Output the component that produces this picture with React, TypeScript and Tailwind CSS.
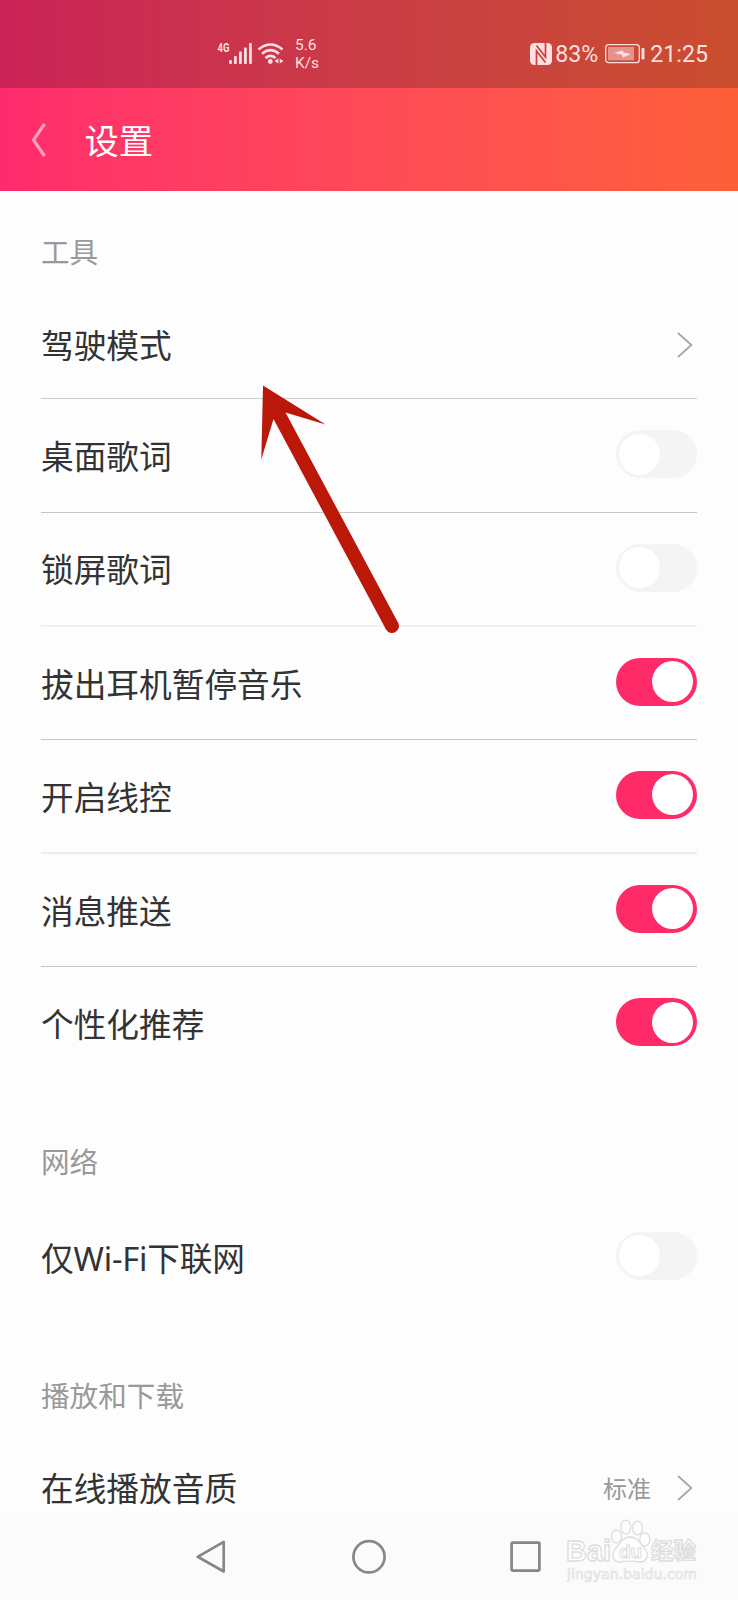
import { ReactNode } from 'react';

interface SettingRowProps {
  label: string;
  children: ReactNode;
  /** Height, divider and spacing classes */
  className?: string;
}

function SettingRow({ label, children, className = '' }: SettingRowProps) {
  return (
    <div className={`flex shrink-0 items-center justify-between ${className}`}>
      <span className="pt-[3.5px] text-[32.7px] leading-[48px] text-[#333333]">{label}</span>
      {children}
    </div>
  );
}

function Switch({ on = false }: { on?: boolean }) {
  return (
    <div
      role="switch"
      aria-checked={on}
      className={`mb-[2px] flex h-12 w-[81px] items-center rounded-full ${
        on ? 'justify-end bg-[#ff2a68] pr-[4px]' : 'justify-start bg-[#f4f4f4] pl-[3px]'
      }`}
    >
      <div className="size-[41px] rounded-full bg-white" />
    </div>
  );
}

function ChevronRight() {
  return (
    <svg width="16" height="26" viewBox="0 0 16 26" fill="none" stroke="#a6a6a6" strokeWidth="1.8">
      <path d="M1 1L14.4 13L1 25" />
    </svg>
  );
}

function SectionTitle({ children, className = '' }: { children: ReactNode; className?: string }) {
  return (
    <h2 className={`shrink-0 text-[28.6px] leading-10 font-normal text-[#999999] ${className}`}>
      {children}
    </h2>
  );
}

function StatusBar() {
  return (
    <div className="flex h-[88px] shrink-0 items-start bg-linear-to-r from-[#cb2257] to-[#c94e2d] pr-[30px] pl-[217px] font-[Roboto,sans-serif] text-[#ffdfdf]">
      {/* Mobile signal and wifi */}
      <svg className="mt-[40px]" width="68" height="26" viewBox="217 40 68 26" fill="currentColor">
        <text x="217.5" y="52.3" fontSize="13" fontWeight="700" textLength="12" lengthAdjust="spacingAndGlyphs">
          4G
        </text>
        <rect x="229" y="60" width="2.8" height="4" rx="0.8" />
        <rect x="234" y="56" width="2.8" height="8" rx="0.8" />
        <rect x="239" y="51.5" width="2.8" height="12.5" rx="0.8" />
        <rect x="244" y="47.5" width="2.8" height="16.5" rx="0.8" />
        <rect x="249" y="43" width="2.8" height="21" rx="0.8" />
        <g fill="none" stroke="currentColor" strokeWidth="2.6">
          <path d="M258.5 49.5Q270.5 39.5 282.5 49.5" />
          <path d="M262 53.8Q270.5 46.6 279 53.8" />
          <path d="M265.5 58Q270.5 53.8 275.5 58" />
        </g>
        <circle cx="270.3" cy="61.5" r="2.4" />
        <path d="M278.3 58.5v5l-3.8-2.5zM279.7 58.5v5l3.8-2.5z" />
      </svg>
      <div className="mt-[36px] ml-[10px] text-[15.5px] leading-[18px]">
        <div>5.6</div>
        <div>K/s</div>
      </div>
      <div className="mt-[40px] ml-auto flex h-7 items-center">
        {/* NFC */}
        <svg className="mr-[3px]" width="22" height="22" viewBox="0 0 22 22">
          <rect width="22" height="22" rx="4.5" fill="currentColor" />
          <g fill="none" stroke="#c8413e" strokeWidth="1.7">
            <path d="M6.5 22V8L15.5 19.5" />
            <path d="M15.5 0V14L6.5 2.5" />
          </g>
        </svg>
        <span className="w-[50px] text-[23.2px] leading-7">83%</span>
        <svg className="mr-[5px]" width="40" height="20" viewBox="0 0 40 20">
          <rect x="0.7" y="0.7" width="33.6" height="18" rx="3" fill="none" stroke="currentColor" strokeWidth="1.3" />
          <rect x="3" y="3" width="26" height="13.4" fill="currentColor" opacity="0.5" />
          <path d="M9 9L17.5 6.2L18.5 8.6L26 10L18 13.4L16.6 10.6Z" fill="currentColor" />
          <rect x="36.5" y="4" width="3" height="11.5" rx="1" fill="currentColor" />
        </svg>
        <span className="text-[23.2px] leading-7">21:25</span>
      </div>
    </div>
  );
}

function NavigationBar() {
  return (
    <div className="flex h-[86px] shrink-0 items-center bg-[#fbfbfb] pl-[196px]">
      <svg width="346" height="36" viewBox="196 1539 346 36" fill="none" stroke="#878787" strokeWidth="2.7" strokeLinejoin="round">
        <path d="M223.7 1541.8V1571.5L197.7 1556.8Z" />
        <circle cx="369" cy="1556.8" r="15.6" />
        <rect x="511.6" y="1542.6" width="27.8" height="28" rx="1" />
      </svg>
    </div>
  );
}

function Watermark() {
  return (
    <svg
      className="absolute top-[1515px] left-[560px]"
      width="145"
      height="70"
      viewBox="560 1515 145 70"
      fill="#fdfdfd"
      stroke="#dedede"
      strokeWidth="1.3"
    >
      <text x="566" y="1560.5" fontFamily="Liberation Sans" fontWeight="700" fontSize="29" textLength="45" lengthAdjust="spacingAndGlyphs">
        Bai
      </text>
      <ellipse cx="616.5" cy="1536.5" rx="5" ry="6.5" />
      <ellipse cx="625.8" cy="1527" rx="5" ry="6.8" />
      <ellipse cx="637.5" cy="1528" rx="5" ry="6.8" />
      <ellipse cx="644.8" cy="1539.5" rx="5" ry="6.5" />
      <path d="M630 1537C638 1537 640 1544 645 1549C650 1556 646 1562 640 1562C634 1561 626 1561 620 1562C613 1562 611 1555 615 1549C620 1544 623 1537 630 1537Z" />
      <text x="619" y="1558" fontFamily="Liberation Sans" fontWeight="700" fontSize="19" strokeWidth="1">
        du
      </text>
      <text x="651" y="1559" fontFamily="Noto Sans CJK SC" fontWeight="700" fontSize="22.5">
        经验
      </text>
      <text x="567" y="1578.5" fontFamily="DejaVu Sans" fontSize="14" strokeWidth="0.7" textLength="130" lengthAdjust="spacingAndGlyphs">
        jingyan.baidu.com
      </text>
    </svg>
  );
}

export default function App() {
  return (
    <div className="relative flex h-[1600px] w-[738px] flex-col overflow-hidden bg-[#fdfdfd] font-['Noto_Sans','Noto_Sans_CJK_SC',sans-serif]">
      <StatusBar />

      <header className="flex h-[102.5px] shrink-0 items-center bg-linear-to-r from-[#ff2a6d] to-[#fd6038] pl-[31px]">
        <svg className="mt-[1px]" width="16" height="34" viewBox="0 0 16 34" fill="none" stroke="#ffa0b8" strokeWidth="3.2">
          <path d="M13.5 1L2.5 17L13.5 33" />
        </svg>
        <h1 className="ml-[37.5px] pt-[4px] text-[34.3px] leading-[48px] font-normal text-white">设置</h1>
      </header>

      <main className="flex flex-col px-[41px]">
        <SectionTitle className="mt-[41px]">工具</SectionTitle>
        <SettingRow label="驾驶模式" className="mt-[19px] h-[108.5px] border-b border-[#cccccc]">
          <div className="pt-[1px] pr-[4px]">
            <ChevronRight />
          </div>
        </SettingRow>
        <SettingRow label="桌面歌词" className="h-[113.6px] border-b border-[#c6c6c6]">
          <Switch />
        </SettingRow>
        <SettingRow label="锁屏歌词" className="h-[114px] border-b-2 border-[#f0f0f0]">
          <Switch />
        </SettingRow>
        <SettingRow label="拔出耳机暂停音乐" className="h-[113.4px] border-b border-[#c6c6c6]">
          <Switch on />
        </SettingRow>
        <SettingRow label="开启线控" className="h-[114px] border-b-2 border-[#ececec]">
          <Switch on />
        </SettingRow>
        <SettingRow label="消息推送" className="h-[113px] border-b border-[#c6c6c6]">
          <Switch on />
        </SettingRow>
        <SettingRow label="个性化推荐" className="h-[113px]">
          <Switch on />
        </SettingRow>

        <SectionTitle className="mt-[62px]">网络</SectionTitle>
        <SettingRow label="仅Wi-Fi下联网" className="mt-[18.5px] h-[113px] tracking-[-0.2px]">
          <Switch />
        </SettingRow>

        <SectionTitle className="mt-[62.5px]">播放和下载</SectionTitle>
        <SettingRow label="在线播放音质" className="mt-[15px] h-[113px]">
          <div className="flex items-center gap-[26px] pt-[2px] pr-[4px]">
            <span className="pt-[1px] text-2xl text-[#999999]">标准</span>
            <ChevronRight />
          </div>
        </SettingRow>
      </main>

      <div className="absolute inset-x-0 bottom-0 flex flex-col">
        <NavigationBar />
      </div>
      <Watermark />

      {/* Pointer to the driving mode row */}
      <svg className="absolute top-[380px] left-[255px]" width="150" height="260" viewBox="255 380 150 260" fill="#bb180a">
        <path d="M263 385.5L325.5 424.5L285.5 412.5L398 622.5A6.8 6.8 0 0 1 386 629.5L273.5 419L261.3 459.5Z" />
      </svg>
    </div>
  );
}
